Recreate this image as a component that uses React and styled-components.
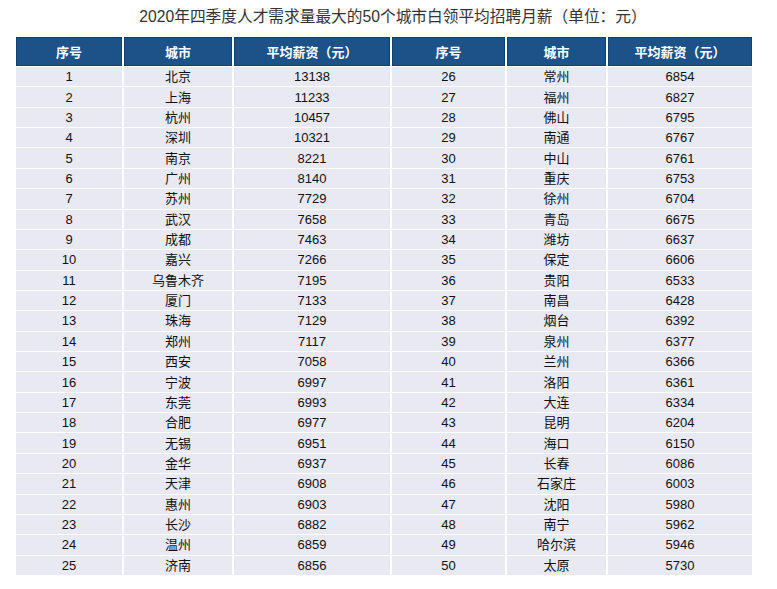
import React from "react";
import styled, { createGlobalStyle } from "styled-components";

const GlobalStyle = createGlobalStyle`
  html, body {
    margin: 0;
    padding: 0;
    background: #ffffff;
  }
  body {
    font-family: "Liberation Sans", Arial, "Noto Sans CJK SC", sans-serif;
  }
`;

const Page = styled.div`
  width: 777px;
  height: 589px;
  padding: 6px 0 0 14px;
  box-sizing: border-box;
  background: #fff;
`;

const Title = styled.div`
  width: 740px;
  box-sizing: border-box;
  padding-left: 18px;
  text-align: center;
  font-size: 15.7px;
  line-height: 22px;
  color: #333;
  margin-bottom: 8px;
`;

const Table = styled.table`
  table-layout: fixed;
  width: 740px;
  border-collapse: separate;
  border-spacing: 2px 1px;
`;

const HeadCell = styled.th`
  box-sizing: border-box;
  height: 29px;
  padding: 0;
  background: #1d5288;
  border: 1px solid #123f72;
  color: #fff;
  font-size: 13px;
  font-weight: bold;
  text-align: center;
  vertical-align: middle;
`;

const Cell = styled.td`
  box-sizing: border-box;
  height: 19.36px;
  padding: 0;
  background: #e8e9f3;
  color: #111;
  font-size: 13px;
  line-height: 19px;
  text-align: center;
  vertical-align: middle;
`;

const widths = [106, 108, 156, 113, 99, 144];

const left = [
  ["北京", 13138], ["上海", 11233], ["杭州", 10457], ["深圳", 10321], ["南京", 8221],
  ["广州", 8140], ["苏州", 7729], ["武汉", 7658], ["成都", 7463], ["嘉兴", 7266],
  ["乌鲁木齐", 7195], ["厦门", 7133], ["珠海", 7129], ["郑州", 7117], ["西安", 7058],
  ["宁波", 6997], ["东莞", 6993], ["合肥", 6977], ["无锡", 6951], ["金华", 6937],
  ["天津", 6908], ["惠州", 6903], ["长沙", 6882], ["温州", 6859], ["济南", 6856],
];

const right = [
  ["常州", 6854], ["福州", 6827], ["佛山", 6795], ["南通", 6767], ["中山", 6761],
  ["重庆", 6753], ["徐州", 6704], ["青岛", 6675], ["潍坊", 6637], ["保定", 6606],
  ["贵阳", 6533], ["南昌", 6428], ["烟台", 6392], ["泉州", 6377], ["兰州", 6366],
  ["洛阳", 6361], ["大连", 6334], ["昆明", 6204], ["海口", 6150], ["长春", 6086],
  ["石家庄", 6003], ["沈阳", 5980], ["南宁", 5962], ["哈尔滨", 5946], ["太原", 5730],
];

const headers = ["序号", "城市", "平均薪资（元）", "序号", "城市", "平均薪资（元）"];

const App = () => {
  return (
    <Page>
      <GlobalStyle />
      <Title>2020年四季度人才需求量最大的50个城市白领平均招聘月薪（单位：元）</Title>
      <Table>
        <colgroup>
          {widths.map((w, i) => (
            <col key={i} style={{ width: w }} />
          ))}
        </colgroup>
        <thead>
          <tr>
            {headers.map((h, i) => (
              <HeadCell key={i}>{h}</HeadCell>
            ))}
          </tr>
        </thead>
        <tbody>
          {left.map((row, i) => (
            <tr key={i}>
              <Cell>{i + 1}</Cell>
              <Cell>{row[0]}</Cell>
              <Cell>{row[1]}</Cell>
              <Cell>{i + 26}</Cell>
              <Cell>{right[i][0]}</Cell>
              <Cell>{right[i][1]}</Cell>
            </tr>
          ))}
        </tbody>
      </Table>
    </Page>
  );
};

export default App;
